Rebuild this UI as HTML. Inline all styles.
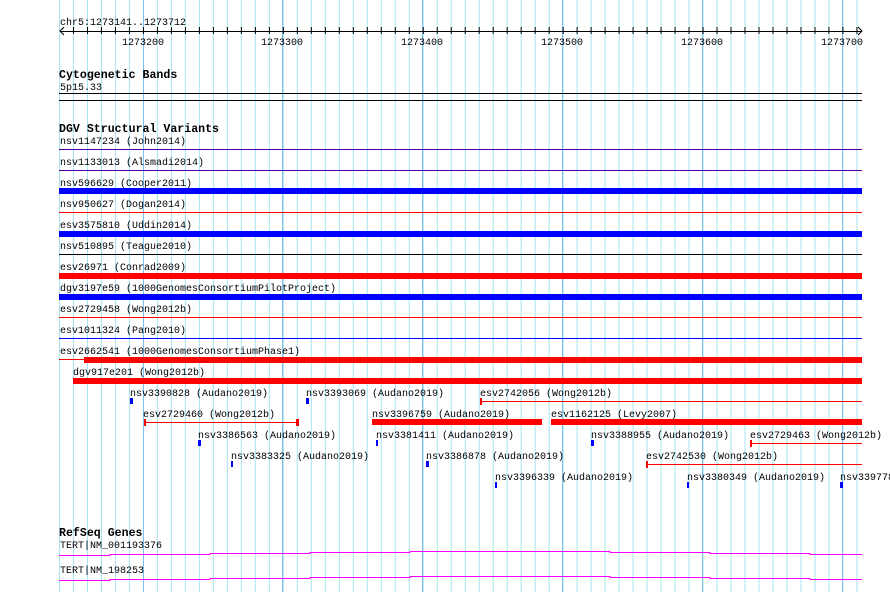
<!DOCTYPE html>
<html><head><meta charset="utf-8"><style>
html,body{margin:0;padding:0;background:#fff;}
svg{display:block;}
text{font-family:"Liberation Mono",monospace;font-size:10px;fill:#000;}
.b{font-weight:bold;font-size:11.6px;}
</style></head><body>
<svg width="890" height="592" xmlns="http://www.w3.org/2000/svg">
<defs>
<pattern id="g" x="59" y="0" width="13.99" height="592" patternUnits="userSpaceOnUse">
<rect x="0" y="0" width="1" height="592" fill="#a8e4f0"/>
</pattern>
<pattern id="t" x="59" y="0" width="13.99" height="592" patternUnits="userSpaceOnUse">
<rect x="0" y="27" width="1" height="7" fill="#000"/>
</pattern>
</defs>
<rect x="59" y="0" width="803" height="592" fill="url(#g)"/>
<g fill="#80c0f0">
<rect x="143" y="0" width="1" height="592"/><rect x="282" y="0" width="1" height="592"/>
<rect x="422" y="0" width="1" height="592"/><rect x="562" y="0" width="1" height="592"/>
<rect x="702" y="0" width="1" height="592"/><rect x="842" y="0" width="1" height="592"/>
</g>
<!-- ruler -->
<text x="60" y="25">chr5:1273141..1273712</text>
<rect x="60" y="31" width="802" height="1" fill="#000"/>
<rect x="73" y="27" width="789" height="7" fill="url(#t)"/>
<path d="M64 27 L60 31 L64 35 M858 27 L862 31 L858 35" stroke="#000" fill="none"/>
<g text-anchor="middle">
<text x="143" y="45">1273200</text><text x="282" y="45">1273300</text>
<text x="422" y="45">1273400</text><text x="562" y="45">1273500</text>
<text x="702" y="45">1273600</text><text x="842" y="45">1273700</text>
</g>
<!-- cytobands -->
<text class="b" x="59" y="78">Cytogenetic Bands</text>
<text x="60" y="90">5p15.33</text>
<rect x="59" y="93" width="803" height="1" fill="#000"/>
<rect x="59" y="100" width="803" height="1" fill="#000"/>
<!-- DGV -->
<text class="b" x="59" y="132">DGV Structural Variants</text>
<text x="60" y="144">nsv1147234 (John2014)</text>
<rect x="59" y="149" width="803" height="1" fill="#5000a0"/>
<text x="60" y="165">nsv1133013 (Alsmadi2014)</text>
<rect x="59" y="170" width="803" height="1" fill="#5000a0"/>
<text x="60" y="186">nsv596629 (Cooper2011)</text>
<rect x="59" y="188" width="803" height="6" fill="#0000ff"/>
<text x="60" y="207">nsv950627 (Dogan2014)</text>
<rect x="59" y="212" width="803" height="1" fill="#ff0000"/>
<text x="60" y="228">esv3575810 (Uddin2014)</text>
<rect x="59" y="231" width="803" height="6" fill="#0000ff"/>
<text x="60" y="249">nsv510895 (Teague2010)</text>
<rect x="59" y="254" width="803" height="1" fill="#000"/>
<text x="60" y="270">esv26971 (Conrad2009)</text>
<rect x="59" y="273" width="803" height="6" fill="#ff0000"/>
<text x="60" y="291">dgv3197e59 (1000GenomesConsortiumPilotProject)</text>
<rect x="59" y="294" width="803" height="6" fill="#0000ff"/>
<text x="60" y="312">esv2729458 (Wong2012b)</text>
<rect x="59" y="317" width="803" height="1" fill="#ff0000"/>
<text x="60" y="333">esv1011324 (Pang2010)</text>
<rect x="59" y="338" width="803" height="1" fill="#0000ff"/>
<text x="60" y="354">esv2662541 (1000GenomesConsortiumPhase1)</text>
<rect x="59" y="359" width="26" height="1" fill="#ff0000"/>
<rect x="84" y="357" width="778" height="6" fill="#ff0000"/>
<text x="73" y="375">dgv917e201 (Wong2012b)</text>
<rect x="73" y="378" width="789" height="6" fill="#ff0000"/>
<!-- lower features -->
<g fill="#0000ff">
<rect x="130" y="398" width="3" height="6"/><rect x="306" y="398" width="3" height="6"/>
<rect x="198" y="440" width="3" height="6"/><rect x="376" y="440" width="2" height="6"/>
<rect x="591" y="440" width="3" height="6"/><rect x="231" y="461" width="2" height="6"/>
<rect x="426" y="461" width="3" height="6"/><rect x="495" y="482" width="2" height="6"/>
<rect x="687" y="482" width="2" height="6"/><rect x="840" y="482" width="3" height="6"/>
</g>
<g fill="#ff0000">
<rect x="480" y="401" width="382" height="1"/><rect x="480" y="398" width="2" height="7"/>
<rect x="144" y="422" width="154" height="1"/><rect x="144" y="419" width="2" height="7"/><rect x="296" y="419" width="3" height="7"/>
<rect x="372" y="419" width="170" height="6"/><rect x="551" y="419" width="311" height="6"/>
<rect x="750" y="443" width="112" height="1"/><rect x="750" y="440" width="2" height="7"/>
<rect x="646" y="464" width="216" height="1"/><rect x="646" y="461" width="2" height="7"/>
</g>
<text x="130" y="396">nsv3390828 (Audano2019)</text>
<text x="306" y="396">nsv3393069 (Audano2019)</text>
<text x="480" y="396">esv2742056 (Wong2012b)</text>
<text x="143" y="417">esv2729460 (Wong2012b)</text>
<text x="372" y="417">nsv3396759 (Audano2019)</text>
<text x="551" y="417">esv1162125 (Levy2007)</text>
<text x="198" y="438">nsv3386563 (Audano2019)</text>
<text x="376" y="438">nsv3381411 (Audano2019)</text>
<text x="591" y="438">nsv3388955 (Audano2019)</text>
<text x="750" y="438">esv2729463 (Wong2012b)</text>
<text x="231" y="459">nsv3383325 (Audano2019)</text>
<text x="426" y="459">nsv3386878 (Audano2019)</text>
<text x="646" y="459">esv2742530 (Wong2012b)</text>
<text x="495" y="480">nsv3396339 (Audano2019)</text>
<text x="687" y="480">nsv3380349 (Audano2019)</text>
<text x="840" y="480">nsv3397787</text>
<!-- RefSeq -->
<text class="b" x="59" y="536">RefSeq Genes</text>
<text x="60" y="548">TERT|NM_001193376</text>
<path d="M59 555.5H110V554.5H210V553.5H310V552.5H410V551.5H610V552.5H710V553.5H810V554.5H862" stroke="#ff00ff" fill="none"/>
<text x="60" y="573">TERT|NM_198253</text>
<path d="M59 580.5H110V579.5H210V578.5H310V577.5H410V576.5H610V577.5H710V578.5H810V579.5H862" stroke="#ff00ff" fill="none"/>
</svg>
</body></html>
